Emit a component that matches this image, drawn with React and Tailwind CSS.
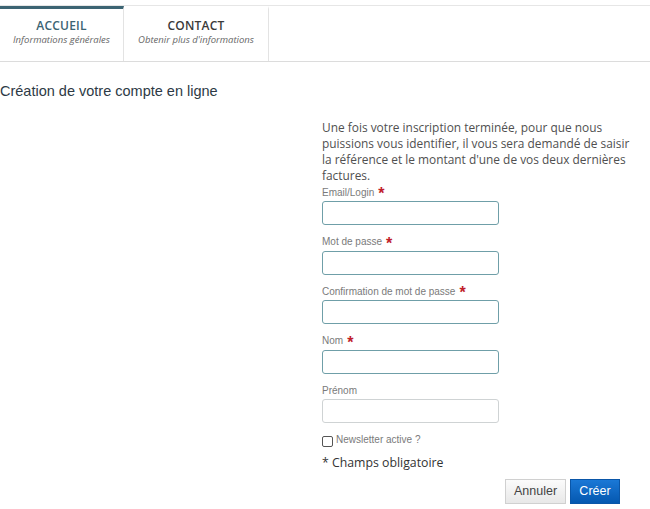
import React from "react";

const fields = [
  { label: "Email/Login", required: true },
  { label: "Mot de passe", required: true },
  { label: "Confirmation de mot de passe", required: true },
  { label: "Nom", required: true },
  { label: "Prénom", required: false },
];

const Tab = ({ title, subtitle, active, width }) => (
  <div
    className={`${width} flex flex-col items-center border-r border-[#e3e3e3] ${
      active ? "border-t-[3px] border-t-[#3c6473]" : "border-t-[3px] border-t-transparent"
    } pt-[10px]`}
  >
    <span
      className={`font-['Open_Sans',sans-serif] text-[12px] font-semibold leading-[14px] tracking-[0.2px] ${
        active ? "text-[#3c6473]" : "text-[#3a3a3a]"
      }`}
    >
      {title}
    </span>
    <span className="font-['Open_Sans',sans-serif] text-[9.5px] italic leading-[13px] text-[#666]">
      {subtitle}
    </span>
  </div>
);

export default function App() {
  return (
    <div className="w-[650px] h-[509px] bg-white overflow-hidden">
      {/* tabs */}
      <div className="mt-[5px] border-t border-[#e6e6e6] flex h-[57px] border-b border-b-[#dcdcdc]">
        <Tab title="ACCUEIL" subtitle="Informations générales" active width="w-[124px]" />
        <Tab title="CONTACT" subtitle="Obtenir plus d'informations" width="w-[145px]" />
      </div>

      <h1 className="mt-[20px] font-['Liberation_Sans',Arial,sans-serif] text-[14.5px] leading-[18px] text-[#2d3a45]">
        Création de votre compte en ligne
      </h1>

      <div className="ml-[322px] mt-[19px] w-[318px]">
        <p className="font-['Open_Sans',sans-serif] text-[11.9px] leading-[16px] text-[#505050]">
          Une fois votre inscription terminée, pour que nous puissions vous identifier, il vous sera
          demandé de saisir la référence et le montant d'une de vos deux dernières factures.
        </p>

        <div className="mt-[2px] flex flex-col">
          {fields.map((f) => (
            <div key={f.label} className="h-[49.5px]">
              <div className="flex items-center h-[14px] font-['Liberation_Sans',Arial,sans-serif] text-[10px] text-[#7a7a7a]">
                {f.label}
                {f.required && (
                  <span className="ml-[4px] text-[16px] font-bold text-[#c0202a] leading-[10px] mt-[4px]">*</span>
                )}
              </div>
              <input
                type="text"
                className={`mt-[2px] block w-[177px] h-[24px] rounded-[3px] border ${
                  f.required ? "border-[#6f9fa8]" : "border-[#cfd3d4]"
                } bg-white outline-none`}
              />
            </div>
          ))}
        </div>

        <label className="mt-[-1px] flex items-start gap-[3px] font-['Liberation_Sans',Arial,sans-serif] text-[10px] text-[#7a7a7a]">
          <span className="mt-[4px] w-[11px] h-[11px] border border-[#555] rounded-[2px] bg-white" />
          Newsletter active ?
        </label>

        <p className="mt-[8px] font-['Open_Sans',sans-serif] text-[12.3px] leading-[16px] text-[#333]">
          * Champs obligatoire
        </p>

        <div className="mt-[8px] flex justify-end gap-[4px] pr-[20px]">
          <button className="w-[61px] h-[25px] border border-[#d0d0d0] bg-gradient-to-b from-[#fbfbfb] to-[#e8e8e8] font-['Liberation_Sans',Arial,sans-serif] text-[12.5px] text-[#444]">
            Annuler
          </button>
          <button className="w-[50px] h-[25px] border border-[#0a56a8] bg-gradient-to-b from-[#1a78d6] to-[#0558b0] font-['Liberation_Sans',Arial,sans-serif] text-[12.5px] text-white">
            Créer
          </button>
        </div>
      </div>
    </div>
  );
}
